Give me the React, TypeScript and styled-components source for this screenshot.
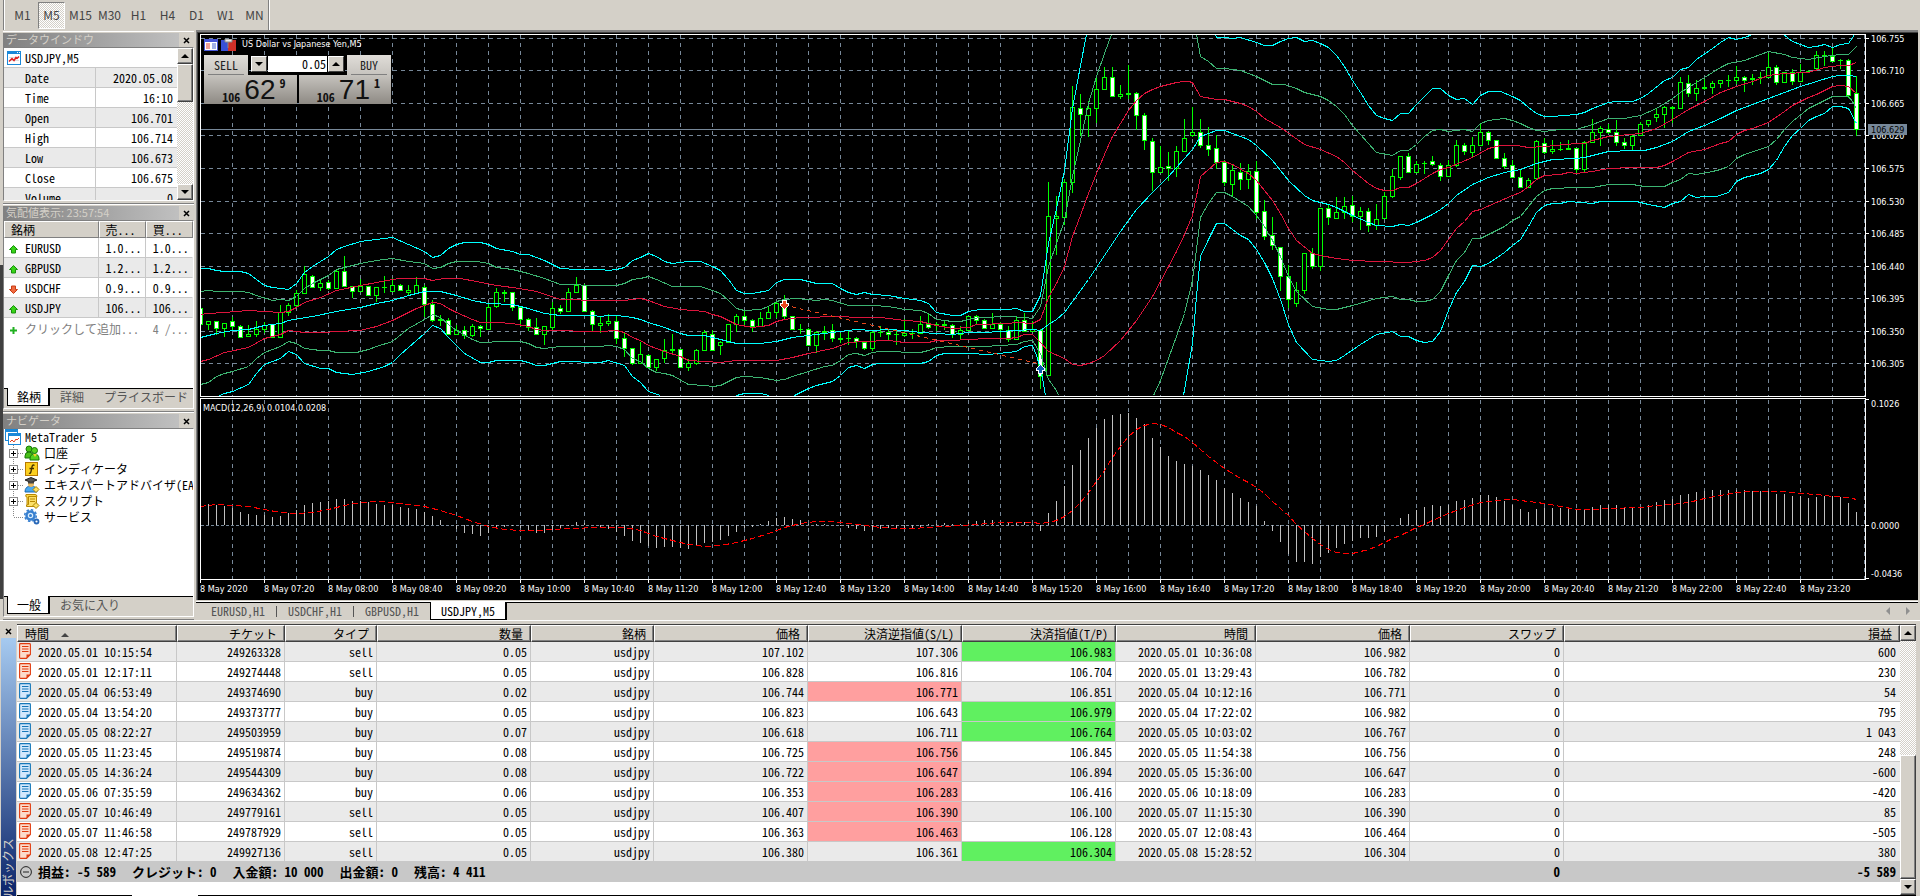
import React from 'react';
import styled, { createGlobalStyle, css } from 'styled-components';

const FACE = '#d4d0c8';
const UI_FONT = '"Noto Sans Mono CJK JP", "Noto Sans CJK JP", "Liberation Mono", monospace';
const CHART_FONT = '"DejaVu Sans Condensed", "DejaVu Sans", sans-serif';

const GlobalStyle = createGlobalStyle`
  *, *::before, *::after { box-sizing: border-box; }
  body { margin: 0; background: ${FACE}; font: 12px/16px ${UI_FONT}; color: #000; }
  button, input { font: inherit; color: inherit; margin: 0; padding: 0; border: 0; border-radius: 0; background: none; }
  table { border-collapse: separate; border-spacing: 0; table-layout: fixed; width: 100%; }
  th, td { padding: 0; font-weight: normal; white-space: nowrap; overflow: hidden; }
  ul { margin: 0; padding: 0; list-style: none; }
`;

const raised = css`
  background: ${FACE};
  border: 1px solid;
  border-color: #fff #404040 #404040 #fff;
  box-shadow: inset -1px -1px #808080;
`;
const dither = css`
  background: repeating-conic-gradient(#fff 0 25%, ${FACE} 0 50%) 0 0 / 2px 2px;
`;

/* ---------- frame ---------- */
const Page = styled.div`display: flex; flex-direction: column; background: ${FACE}; overflow: hidden;`;
const Main = styled.main`display: flex;`;
const Toolbar = styled.nav`
  display: flex; align-items: center; gap: 2px; height: 30px; width: 267px; padding: 0 2px 0 5px;
  margin-left: 3px; border-left: 1px solid #808080; border-right: 1px solid #fff;
  box-shadow: inset 1px 0 #fff, inset -1px 0 #808080;
`;
const Frame = styled.button<{ $on?: boolean }>`
  flex: 0 0 27px; height: 27px; font: 12px/24px "Noto Sans CJK JP", sans-serif; color: #444;
  border: 1px solid transparent; white-space: nowrap;
  ${p => p.$on && css`${dither} border-color: #808080 #fff #fff #808080;`}
`;

/* ---------- docked panels ---------- */
const Side = styled.aside`display: flex; flex: 0 0 196px; width: 196px; min-width: 0; padding: 1px 2px 0 0;`;
const Rail = styled.div`flex: 0 0 3px; padding: 234px 0 21px; &::before { content: ''; display: block; height: 100%; background: #404040; }`;
const Docks = styled.div`flex: 1; min-width: 0; display: flex; flex-direction: column;`;
const Panel = styled.section<{ $grow?: boolean }>`
  display: flex; flex-direction: column; padding: 1px 0 2px; border-top: 1px solid #fff; border-bottom: 1px solid #808080;
  ${p => p.$grow && 'flex: 1;'}
`;
const TitleBar = styled.header`display: flex; height: 14px;`;
const Title = styled.h2`
  flex: 1; margin: 0; padding-left: 3px; font: 11px/13px "Noto Sans CJK JP", sans-serif; color: ${FACE};
  background: linear-gradient(90deg, #808080, #c0c0c0); white-space: nowrap;
`;
const CloseBtn = styled.button`width: 15px; height: 14px; display: flex; align-items: center; justify-content: center;`;
const Body = styled.div<{ $h?: number }>`
  display: flex; flex-direction: column; background: #fff; overflow: hidden;
  border: 1px solid; border-color: #808080 #fff #fff #808080;
  ${p => (p.$h ? `height: ${p.$h}px;` : 'flex: 1;')}
`;
const Split = styled.div`display: flex; flex: 1; min-height: 0;`;
const Fill = styled.div`flex: 1; min-width: 0; min-height: 0; overflow: hidden;`;
const Symbol = styled.div`display: flex; align-items: center; gap: 4px; height: 20px; padding-left: 3px; border-bottom: 1px solid #c8c8c8;`;

const DataTable = styled.table`
  th, td { height: 20px; line-height: 19px; border-bottom: 1px solid #c8c8c8; }
  th { width: 92px; padding-left: 21px; text-align: left; border-right: 1px solid #c8c8c8; }
  td { padding-right: 4px; text-align: right; }
  tr:nth-child(odd) { background: #eaeaea; }
`;
const WatchTable = styled.table`
  thead th { height: 17px; line-height: 15px; text-align: left; padding-left: 6px; ${raised} box-shadow: none; border-color: #fff #808080 #808080 #fff; }
  tbody td { height: 20px; line-height: 19px; padding-left: 7px; border-bottom: 1px solid #c8c8c8; border-right: 1px solid #c8c8c8; }
  tbody td:first-child { padding-left: 5px; }
  tbody td:last-child { border-right-color: transparent; }
  tbody tr:nth-child(even) { background: #eaeaea; }
  tfoot td { height: 21px; color: #808080; padding-left: 7px; }
  tfoot td:first-child { padding-left: 5px; }
  svg { vertical-align: -1px; margin-right: 7px; }
`;
const Tab = styled.button<{ $on?: boolean }>`
  height: 18px; padding: 0 11px; line-height: 16px; color: #555; white-space: nowrap;
  ${p => p.$on && css`background: #fff; color: #000; border: 1px solid #000; border-width: 0 2px 1px 1px; padding: 0 10px;`}
`;
const Tabs = styled.div`
  display: flex; flex: 0 0 20px; padding-left: 3px; background: ${FACE}; box-shadow: inset 0 1px #000; white-space: nowrap; overflow: hidden;
  ${Tab} { padding: 0 10px; }
  ${Tab}:first-child { padding: 0 7px 0 9px; }
`;
const Bar = styled.span`width: 1px; height: 11px; margin-top: 4px; background: #555;`;

const ScrollTrack = styled.div`display: flex; flex-direction: column; flex: 0 0 16px; ${dither}`;
const ScrollBtn = styled.button`display: flex; align-items: center; justify-content: center; flex: 0 0 16px; width: 16px; ${raised}`;
const Thumb = styled.div<{ $before: number; $size: number }>`margin-top: ${p => p.$before}px; height: ${p => p.$size}px; ${raised}`;
const Gap = styled.div`flex: 1;`;

const Tree = styled.ul`
  padding-left: 1px; white-space: nowrap;
  li { display: flex; align-items: center; height: 16px; gap: 4px; }
  li svg + svg { margin-left: -4px; }
  svg { flex: none; }
`;

/* ---------- chart ---------- */
const Workspace = styled.section`flex: 1; min-width: 0; display: flex; flex-direction: column; padding-right: 2px;`;
const ChartBox = styled.div`
  position: relative; background: #000; border-top: 2px solid #808080; border-left: 1px solid #808080;
  > svg { display: block; width: 100%; height: auto; }
`;
const ChartTabs = styled.div`
  display: flex; height: 19px; margin-top: 1px; border-top: 1px solid #fff; box-shadow: inset 0 1px #000; padding-left: 4px;
`;
const Arrows = styled.div`margin-left: auto; display: flex; gap: 16px; align-items: center; padding-right: 8px;`;
const OneClick = styled.div`position: absolute; left: 7px; top: 6px; width: 187px;`;
const ChartTitle = styled.div`display: flex; align-items: center; gap: 3px; height: 13px; color: #fff; font: 9px/13px ${CHART_FONT}; white-space: nowrap; span { margin-left: 3px; }`;
const Deal = styled.div`display: flex; justify-content: space-between; height: 20px; margin-top: 4px; > div { display: flex; gap: 1px; padding-top: 1px; }`;
const DealBtn = styled.button`
  width: 44px; height: 20px; background: linear-gradient(#e0ddd8, #c6c3be); position: relative; line-height: 18px; color: #222;
  &::after { content: ''; position: absolute; left: 4px; right: 4px; bottom: 0; height: 1px; background: #808080; }
`;
const Step = styled.button`width: 16px; height: 16px; display: flex; align-items: center; justify-content: center; ${raised} box-shadow: none;`;
const Lot = styled.input`width: 59px; height: 16px; background: #fff; text-align: right; padding-right: 1px;`;
const Quotes = styled.div`display: flex; gap: 2px;`;
const Quote = styled.div`
  flex: 1; height: 29px; display: flex; justify-content: flex-end; align-items: flex-end; gap: 4px; padding-right: 11px; color: #111;
  background: linear-gradient(#c6c3be, #8e8a84);
  small { font: bold 12px/15px ${UI_FONT}; }
  strong { font: 28px/29px "Liberation Sans", sans-serif; }
  sup { font: bold 12px/15px ${UI_FONT}; align-self: flex-start; }
`;

/* ---------- toolbox ---------- */
const Toolbox = styled.section`display: flex; border-top: 1px solid #fff; padding: 3px 4px 0 0;`;
const Spine = styled.div`flex: 0 0 15px; margin-right: 1px; display: flex; flex-direction: column; padding-left: 1px;`;
const SpineTitle = styled.h2`
  flex: 1 1 0; min-height: 0; margin: 0; padding-bottom: 200px; overflow: hidden; color: ${FACE};
  background: linear-gradient(#0a246a, #a6caf0); writing-mode: vertical-rl; text-orientation: sideways;
  transform: rotate(180deg); font: 12px/14px "Noto Sans CJK JP", sans-serif; white-space: nowrap;
  display: flex; justify-content: flex-end;
`;
const History = styled.div`flex: 1; min-width: 0; display: flex; flex-direction: column; background: #fff; border-top: 1px solid #404040;`;
const HistoryTable = styled.table`
  th { height: 17px; line-height: 15px; text-align: right; padding-right: 7px; ${raised} }
  th:first-child { text-align: left; padding-left: 7px; }
  th svg { vertical-align: 2px; }
  td { height: 20px; line-height: 19px; text-align: right; padding-right: 3px; border-right: 1px solid #c8c8c8; border-bottom: 1px solid #c8c8c8; }
  td:last-child { border-right: 0; padding-right: 4px; }
  tbody tr:nth-child(odd) { background: #eaeaea; }
  td:first-child { text-align: left; padding-left: 2px; }
  td svg { vertical-align: top; margin: 1px 7px 0 0; }
  tfoot td { background: #c8c8c8; border-color: #c8c8c8; font-weight: bold; font-size: 13px; }
`;
const Hit = styled.td<{ $hit?: 'sl' | 'tp' }>`background: ${p => (p.$hit === 'sl' ? '#ff9f9f' : p.$hit === 'tp' ? '#60f060' : 'transparent')};`;
const Sums = styled.div`display: flex; gap: 16px; && svg { flex: none; margin: 4px -10px 0 1px; }`;
const Edge = styled.div`display: flex; height: 1px; background: #000; &::before { content: ''; width: 66px; margin-left: 115px; background: #fff; }`;

/* ---------- icons ---------- */
const Cross = () => <svg width="7" height="7" viewBox="0 0 7 7"><path d="M1 1l5 5M6 1L1 6" stroke="#000" strokeWidth="1.5" /></svg>;
const Tri = ({ up, c = '#000' }: { up?: boolean; c?: string }) => (
  <svg width="8" height="4" viewBox="0 0 8 4"><path d={up ? 'M0 4L4 0L8 4Z' : 'M0 0H8L4 4Z'} fill={c} /></svg>
);
const ChartIcon = () => (
  <svg width="14" height="14" viewBox="0 0 14 14">
    <rect x=".5" y=".5" width="13" height="13" fill="#fff" stroke="#1b88d8" /><rect width="14" height="3" fill="#1b88d8" />
    <path d="M10 1.5h1M12 1.5h1" stroke="#fff" /><path d="M2 6.5h10M2 9.5h10" stroke="#ddd" />
    <path d="M2 10.500l3-3 2 2 2-3 1 1 2-2" fill="none" stroke="#e02020" strokeWidth="1.500" />
  </svg>
);
const RootIcon = () => (
  <svg width="16" height="16" viewBox="0 0 16 16">
    <rect x=".5" y=".5" width="12" height="11" fill="#fff" stroke="#1b88d8" /><rect width="13" height="3" fill="#1b88d8" />
    <rect x="3.500" y="4.500" width="12" height="11" fill="#fff" stroke="#1b88d8" /><rect x="3" y="4" width="13" height="3" fill="#1b88d8" />
    <path d="M5 13l2-2 2 2 2-3 1 1 2-2" fill="none" stroke="#e04020" />
  </svg>
);
const Arrow = ({ up }: { up?: boolean }) => (
  <svg width="9" height="9" viewBox="0 0 9 9">
    <path d={up ? 'M4.500.5L8.500 4.500H6.500V8H2.500V4.500H.5Z' : 'M4.500 8.500L8.500 4.500H6.500V1H2.500V4.500H.5Z'} fill={up ? '#38d418' : '#f06a40'} stroke={up ? '#18900c' : '#c83c14'} />
  </svg>
);
const Plus = () => <svg width="9" height="9" viewBox="0 0 9 9"><path d="M4.500 1v7M1 4.500h7" stroke="#20b020" strokeWidth="2" /></svg>;
const Doc = ({ buy }: { buy: boolean }) => {
  const c = buy ? '#1878b8' : '#e03c10';
  return (
    <svg width="12" height="16" viewBox="0 0 12 16">
      <path d="M1.500.6H10.500Q11.400.6 11.400 1.500V11.500L7.500 15.400H1.500Q.6 15.400.6 14.500V1.500Q.6.6 1.500.6Z" fill={buy ? '#d4e8fc' : '#fcdccc'} stroke={c} strokeWidth="1.100" />
      <path d="M3 3.500h6.500M3 6h6.500M3 8.500h6.500" stroke={c} /><path d="M7.500 15.400V11.500H11.400Z" fill={c} />
    </svg>
  );
};
const Node = ({ leaf }: { leaf?: boolean }) => (
  <svg width="19" height="16" viewBox="0 0 19 16" shapeRendering="crispEdges">
    <path d={leaf ? 'M8.500 0V8' : 'M8.500 0V16'} stroke="#888" strokeDasharray="1 1" /><path d="M9 8.500H19" stroke="#888" strokeDasharray="1 1" />
    {!leaf && <><rect x="4.500" y="4.500" width="8" height="8" fill="#fff" stroke="#888" /><path d="M6 8.500h5M8.500 6v5" stroke="#000" /></>}
  </svg>
);
const Glyph = ({ children }: { children: React.ReactNode }) => <svg width="16" height="16" viewBox="0 0 16 16">{children}</svg>;
const Accounts = () => (
  <Glyph>
    <circle cx="5" cy="4" r="3" fill="#48c018" stroke="#187808" /><path d="M1 11q0-4 4-4t4 4v2H1z" fill="#48c018" stroke="#187808" />
    <circle cx="10.500" cy="5.500" r="3" fill="#58d020" stroke="#187808" /><path d="M6 14q0-5 4.500-5t4.500 5v1H6z" fill="#58d020" stroke="#187808" /><path d="M9 9l2 3 2-3z" fill="#f8d030" />
  </Glyph>
);
const Indicators = () => (
  <Glyph>
    <rect x="1.500" y="1.500" width="12" height="13" fill="#fcd020" stroke="#b87800" />
    <path d="M10.500 4.500Q8.500 3 8 6L7 10.500Q6.500 13 5 12M5.500 7.500h4.500" fill="none" stroke="#403000" strokeWidth="1.300" />
  </Glyph>
);
const Experts = () => (
  <Glyph>
    <path d="M1 15q0-6 6-6t6 6z" fill="#48a8f0" stroke="#1868b0" /><circle cx="7" cy="7" r="3" fill="#e8b860" />
    <path d="M1 3l6-2.500L13 3 7 5.500z" fill="#555" stroke="#222" /><path d="M4 4.500v2h6v-2" fill="#444" /><path d="M12 9.500l3 3-3 3-3-3z" fill="#fce060" stroke="#a88000" />
  </Glyph>
);
const Scripts = () => (
  <Glyph>
    <path d="M2 1.500h9q2 0 2 2H5V12H3V4Q1 4 2 1.500Z" fill="#fcd848" stroke="#b88800" /><path d="M4.500 3.500h8v8q0 2-2 2h-8q-1-2 2-2z" fill="#fce068" stroke="#b88800" />
    <path d="M6 6h5M6 8.500h5" stroke="#b88800" /><path d="M12 9.500l3 3-3 3-3-3z" fill="#fce060" stroke="#a88000" />
  </Glyph>
);
const Services = () => (
  <Glyph>
    <circle cx="6.500" cy="6.500" r="4" fill="#d8ecfc" stroke="#3880d0" strokeWidth="2.500" /><circle cx="6.500" cy="6.500" r="5.800" fill="none" stroke="#3880d0" strokeWidth="1.500" strokeDasharray="2.500 2" />
    <circle cx="6.500" cy="6.500" r="1.500" fill="#3880d0" /><circle cx="12.500" cy="12.500" r="2" fill="#fff" stroke="#2868b8" strokeWidth="1.800" />
  </Glyph>
);

/* ---------- chart data: levels are thirds of a plot unit below the top of the pane ---------- */
type Candle = [number, number, number, number, number];
const LOW_SHIFT = 510;
// high, body top, body bottom, low, 1 = falling
const asia: Candle[] = [
  [324,324,373,373,1],[364,364,374,387,0],[363,364,386,403,1],[370,370,386,410,0],[352,363,380,390,1],[376,379,412,412,1],[377,403,410,410,0],[363,388,404,410,0],
  [367,377,388,396,0],[374,374,412,412,1],[315,337,412,412,0],[310,316,337,347,0],[270,280,317,322,0],[199,223,280,280,0],[226,229,262,262,1],[240,250,262,272,0],
  [242,247,266,268,1],[208,214,265,265,0],[169,213,259,259,1],[258,259,275,293,1],[238,259,275,275,0],[258,259,286,286,1],[262,262,287,303,0],[229,263,263,276,0],
  [236,256,274,274,0],[252,255,271,271,1],[256,270,276,286,0],[231,256,279,279,0],[255,262,313,349,1],[301,313,361,365,1],[346,358,361,376,1],[355,361,403,403,1],
  [377,391,403,403,0],[380,391,407,416,1],[373,379,407,410,0],[377,379,386,410,1],[312,322,388,388,0],[265,277,320,322,0],[270,277,280,304,0],[277,277,322,331,1],
  [320,322,358,378,1],[355,358,382,391,1],[355,382,403,403,1],[379,379,404,434,0],[307,325,383,388,0],[316,325,334,340,1],[265,277,334,334,0],[232,256,278,278,0],
  [252,256,334,334,1],[330,334,373,391,1],[352,371,376,398,0],[343,364,370,376,0],[349,363,415,431,1],[400,415,445,470,1],[445,445,490,494,1],[427,463,490,490,0],
  [464,466,502,502,1],[478,478,502,512,0],[418,451,475,488,0],[403,448,452,460,0],[448,448,502,502,1],[478,490,503,512,0],[448,451,490,494,0],[391,397,451,451,0],
  [391,403,451,451,1],[424,427,437,464,0],[373,373,427,427,0],[343,349,374,395,0],[331,349,361,373,1],[358,361,380,395,1],[337,355,379,379,0],[321,337,355,355,0],
  [305,310,337,353,0],[286,310,349,355,1],[349,349,388,388,1],[373,387,387,400,0],[385,388,436,436,1],[393,397,436,458,0],[379,394,398,419,0],[373,391,415,424,1],
  [400,415,418,428,0],[392,415,415,434,0],[412,415,424,443,1],[424,427,445,449,1],[393,397,445,451,0],[379,397,397,410,0],[391,397,404,418,1],[388,403,403,434,0],
  [358,400,407,410,0],[388,400,400,416,0],[349,373,401,401,0],[342,373,382,385,1],[367,373,377,391,0],[361,373,377,389,0],[373,376,403,412,1],[379,391,403,418,0],
  [349,349,391,391,0],[347,349,361,373,1],[358,361,385,385,1],[340,373,385,385,0],[368,373,389,413,1],[379,391,418,425,1],[352,361,418,418,0],[340,361,394,394,1],
  [364,388,394,394,0],[388,391,529,566,1],
];
const newYork: Candle[] = [
  [457,559,1036,1036,0],[499,559,565,674,0],[448,457,562,582,0],[168,232,457,488,0],[193,235,253,316,1],[214,235,256,320,0],[139,178,235,278,0],[112,142,178,178,0],
  [112,142,199,199,1],[166,193,199,206,0],[107,190,193,206,0],[187,190,256,299,1],[250,256,331,359,1],[325,334,427,482,1],[349,412,427,427,0],[367,409,415,452,1],
  [349,364,415,440,0],[268,325,364,364,0],[233,307,316,319,0],[268,307,346,352,1],[292,346,358,376,1],[316,355,397,415,1],[392,397,457,467,1],[404,421,464,496,0],
  [400,427,448,478,1],[404,424,448,476,0],[394,424,547,565,1],[511,544,619,628,1],[562,616,646,658,1],[652,652,739,782,1],[706,739,808,832,1],[757,781,821,829,0],
  [670,670,781,790,0],[655,670,709,716,1],[535,535,709,721,0],[524,535,562,583,1],[502,547,565,565,0],[502,529,547,566,0],[499,526,559,574,1],[532,544,559,598,0],
  [536,544,586,604,1],[523,568,586,598,0],[487,499,565,565,0],[418,439,499,502,0],[379,379,442,448,0],[370,379,427,427,1],[394,403,427,427,0],[394,401,401,430,0],
  [379,394,403,405,1],[400,406,439,452,1],[392,406,439,439,0],[331,346,406,409,0],[340,346,364,374,1],[322,346,367,380,0],[283,307,346,346,0],[303,307,331,344,1],
  [330,331,385,385,1],[370,385,409,415,1],[392,406,442,442,1],[418,442,472,472,1],[445,451,472,472,0],[331,334,445,445,0],[325,340,367,370,1],[331,358,364,371,0],
  [337,358,358,362,0],[331,355,358,358,0],[355,355,418,427,1],[334,337,418,424,0],[268,307,337,337,0],[289,295,307,347,0],[283,298,307,310,1],[271,307,337,346,1],
  [325,337,346,355,1],[313,319,346,361,0],[277,283,316,316,0],[271,271,283,290,0],[238,253,262,274,0],[229,232,253,292,0],[228,232,235,277,0],[142,157,235,235,0],
  [136,160,190,200,1],[151,175,190,212,0],[148,172,176,179,0],[154,160,172,190,0],[151,151,160,172,0],[136,151,151,170,0],[110,142,151,161,0],[139,142,151,184,1],
  [133,146,149,163,0],[127,143,143,160,0],[70,112,142,142,0],[106,112,157,163,1],[127,127,157,157,0],[118,127,154,163,1],[103,127,154,154,0],[121,124,124,127,0],
  [64,76,115,115,0],[64,76,76,107,0],[52,79,94,94,1],[88,92,92,115,0],[88,91,196,203,1],[140,190,298,317,1],
];
const candles: Candle[] = [
  ...asia.map(([h, t, b, l, f]) => [h + LOW_SHIFT, t + LOW_SHIFT, b + LOW_SHIFT, l + LOW_SHIFT, f] as Candle),
  ...newYork,
];

const CYAN = '#00ffff', GREEN = '#3cb371', RED = '#dc143c';
// Each band is split over four windows (a, b, c, d); "|" breaks the line where it leaves the pane.
type Band = { color: string; a: string; b: string; c: string; d: string };
const bands: Band[] = [
  { color: CYAN,
    a: '13,205 37,204 61,210 85,214 133,215 157,220 181,238 205,256 229,262 277,268 301,249 325,216 349,199 397,170 421,148 445,139 493,124 541,118 589,112 637,133 685,154 709,172 733,165 757,145 781,132 805,127 853,127 877,133 901,145 949,154 973,162 997,164 1045,181 1093,204 1141,209 1213,208 1237,211 1261,208 1285,202 1309,182',
    b: '1,172 25,159 49,170 73,184 97,190 145,184 181,184 217,198 241,210 265,238 289,270 313,281 337,280 385,270 409,247 433,238 481,238 529,250 577,250 601,264 625,276 649,283 673,277 697,283 745,286 793,295 841,301 865,310 889,337 937,346 961,346 985,335 1021,328 1105,328 1129,325 1153,334 1177,334',
    c: '121,796 145,640 169,535 193,420 217,235 241,105 260,14 | 647,14 649,22 673,22 697,24 721,22 769,37 793,46 817,46 841,34 865,25 889,21 913,34 937,31 961,39 985,52 1009,76 1033,108 1057,150 1081,188 1105,226 1129,255 1153,265 1177,271 1201,250 1225,250 1249,224 1273,199 1297,176',
    d: '1,175 25,195 49,208 73,205 97,223 121,196 145,184 181,184 217,198 241,210 265,232 289,249 313,260 337,259 409,253 433,247 457,235 505,217 529,214 577,213 601,205 625,190 673,151 697,142 721,118 745,112 769,87 817,54 841,38 865,22 889,28 913,22 937,14 | 1030,14 1057,34 1105,52 1129,49 1153,43 1177,52 1201,43 1225,40 1243,14' },
  { color: GREEN,
    a: '13,275 37,271 61,274 133,274 157,277 181,286 229,301 253,298 277,301 301,289 325,264 349,250 397,226 421,208 445,202 493,190 541,181 589,175 637,184 685,190 709,205 733,202 757,190 781,184 841,184 877,190 901,202 949,209 997,220 1045,235 1093,253 1141,253 1165,257 1261,257 1285,250 1309,238',
    b: '1,235 25,229 49,238 97,259 181,260 217,270 241,280 265,301 289,325 313,331 361,328 385,320 409,305 433,298 469,295 529,301 553,298 577,300 625,316 697,317 745,319 793,328 841,331 865,340 889,358 937,364 961,364 985,357 1021,352 1105,349 1153,352 1177,355',
    c: '121,830 145,710 169,640 193,570 217,440 241,330 265,220 289,140 313,70 335,14 | 589,14 601,78 625,94 649,115 673,115 721,121 769,138 793,152 817,163 853,163 889,174 913,187 961,199 985,210 1009,228 1033,253 1057,286 1105,340 1129,366 1177,376 1201,361 1225,361 1249,342 1273,318 1297,301',
    d: '1,298 25,304 73,299 97,304 121,280 145,271 193,265 217,271 241,280 265,292 289,301 313,304 361,299 409,298 457,284 505,265 553,265 601,256 649,235 697,205 721,187 769,157 817,127 841,112 865,100 913,91 961,73 985,64 1033,73 1057,81 1105,88 1153,80 1201,73 1225,73 1249,50' },
  { color: RED,
    a: '13,344 37,340 85,337 157,331 205,334 253,337 277,333 301,322 325,307 373,292 421,271 493,256 541,247 589,238 613,235 685,235 709,241 745,235 793,235 841,243 901,256 949,262 1021,274 1093,298 1141,298 1165,301 1285,301',
    b: '1,295 25,301 73,319 121,328 193,334 217,343 241,349 265,360 289,373 337,381 385,376 409,363 433,358 481,352 601,349 649,353 721,352 793,360 841,363 889,376 937,385 985,383 1009,373 1105,370 1129,367 1177,370',
    c: '121,868 145,802 169,760 193,710 217,618 241,556 265,490 289,430 313,374 337,320 361,280 385,242 409,212 433,190 457,178 481,169 529,158 553,154 565,154 577,158 601,199 649,208 673,209 721,220 745,230 769,244 793,264 841,291 913,343 961,358 1009,379 1033,397 1057,421 1105,460 1129,474 1153,481 1177,482 1201,472 1225,472 1249,460 1297,430',
    d: '1,417 25,412 97,382 145,354 181,346 229,346 265,352 313,349 409,340 433,340 457,330 505,318 601,310 649,295 697,267 745,238 793,213 841,187 889,169 937,154 985,136 1033,130 1105,127 1153,112 1201,105 1225,105 1249,97' },
  { color: RED,
    a: '13,485 37,478 85,458 157,442 205,415 253,403 277,391 325,397 385,397 421,395 493,391 541,379 589,361 637,337 661,325 685,316 709,307 733,310 757,325 781,337 829,358 853,367 901,368 949,370 997,379 1021,388 1045,391 1213,394 1261,391 1285,398 1309,412',
    b: '1,421 25,436 73,455 121,469 145,481 193,483 241,488 289,481 409,481 457,472 505,460 577,445 601,436 625,427 673,424 745,421 793,427 865,427 889,421 937,421 985,418 1045,415 1105,415 1129,412 1153,403 1177,403',
    c: '121,937 145,965 193,986 217,1002 241,1006 265,1000 289,990 313,976 361,930 409,870 457,798 505,710 529,663 553,614 577,555 601,440 649,397 673,394 697,403 745,430 769,450 793,482 817,512 841,550 865,596 889,630 937,670 961,675 1009,685 1057,691 1129,694 1225,697 1273,691 1297,682',
    d: '1,662 25,628 49,595 73,574 97,544 121,538 169,517 217,496 241,487 265,470 289,448 313,436 361,433 385,427 409,430 457,424 505,415 577,412 649,412 673,406 697,394 745,367 793,358 841,341 865,333 889,313 913,301 937,294 985,277 1033,244 1057,227 1105,202 1129,193 1177,169 1201,166 1225,169 1249,190' },
  { color: GREEN,
    a: '13,553 37,547 61,530 85,520 109,514 157,498 181,476 205,458 253,439 277,424 301,430 325,445 373,451 397,451 421,457 481,457 517,448 541,440 589,424 637,385 685,358 709,343 733,352 757,372 781,391 829,418 853,427 877,427 901,424 973,424 997,430 1021,441 1045,445 1093,439 1213,439 1237,436 1261,440 1285,449 1309,475',
    b: '1,484 25,506 49,517 73,520 97,527 145,552 193,556 217,559 241,556 265,545 289,532 313,529 361,532 409,541 433,538 457,529 505,514 553,499 577,495 601,480 625,464 649,460 673,466 697,458 721,454 841,458 865,452 889,441 937,439 1033,439 1081,436 1129,433 1153,424 1177,421',
    c: '121,970 145,1047 169,1080 176,1096 | 460,1096 481,1050 505,985 529,920 553,850 577,750 601,562 625,520 649,487 673,487 697,500 745,529 769,556 793,590 817,630 841,680 865,740 889,785 937,828 985,838 1009,838 1057,825 1129,804 1177,800 1201,808 1225,808 1249,814 1273,815 1297,808',
    d: '1,785 25,735 49,690 73,667 97,625 121,625 145,613 193,589 217,572 241,560 265,530 289,498 313,481 337,475 361,475 385,471 457,471 505,463 577,463 613,468 673,469 697,457 721,449 745,430 769,434 817,425 841,419 865,410 889,385 913,374 985,349 1009,328 1033,298 1057,274 1105,235 1177,199 1225,199 1237,214 1249,235' },
  { color: CYAN,
    a: '70,586 85,580 109,574 157,552 181,521 205,494 253,475 277,454 301,463 325,490 373,505 397,506 421,517 469,523 517,514 565,499 589,487 613,464 637,442 685,400 709,376 733,386 757,413 805,460 853,487 877,487 901,481 973,481 997,487 1021,496 1045,496 1093,484 1213,487 1237,481 1285,497 1309,530',
    b: '1,547 25,574 61,586 | 289,586 313,580 361,580 388,586 | 464,586 505,566 529,556 577,544 601,526 625,502 649,495 673,505 697,493 721,490 841,490 865,484 889,467 913,460 985,460 1045,463 1105,457 1129,454 1153,439 1177,436 1189,465',
    c: '121,1015 129,1060 136,1096 | 549,1096 565,1010 577,940 589,800 601,680 625,628 649,580 673,580 697,598 721,615 745,627 769,658 793,696 817,744 841,808 865,882 889,937 937,988 985,994 1009,990 1033,976 1081,944 1129,913 1177,904 1201,919 1225,919 1249,931 1273,937 1297,934',
    d: '1,905 25,842 49,787 73,755 97,706 121,709 145,700 193,667 217,646 241,628 265,590 289,547 313,526 337,520 361,520 385,514 457,520 481,514 589,514 625,523 673,532 697,520 721,514 745,493 769,502 793,499 829,498 865,487 889,454 913,442 961,430 985,418 1009,391 1033,350 1057,316 1081,295 1105,272 1129,260 1153,250 1177,229 1201,229 1225,234 1249,280' },
  { color: CYAN,
    a: '13,413 61,400 109,391 157,388 205,377 253,370 277,362 349,349 421,334 493,322 541,311 589,301 637,286 661,280 685,274 733,274 781,286 829,301 877,311 949,314 997,325 1045,340 1093,347 1189,346 1213,349 1237,346 1261,346 1309,353',
    b: '1,358 25,367 73,383 121,400 145,406 193,406 241,418 289,430 361,430 409,424 457,412 505,406 553,399 601,394 649,388 697,391 745,388 793,391 841,397 889,400 937,404 985,397 1033,397 1081,394 1129,391 1177,388',
    c: '121,901 145,883 169,867 193,846 217,814 265,748 313,676 361,604 409,538 457,487 505,440 553,385 577,358 601,318 649,301 673,301 697,310 745,327 769,346 817,390 865,452 913,495 937,510 985,522 1009,532 1057,556 1105,576 1129,586 1177,589 1201,583 1225,586 1249,577 1297,553',
    d: '1,538 25,520 49,496 97,464 145,442 193,427 241,419 289,400 337,389 409,385 433,381 505,364 577,361 613,360 649,352 697,334 745,304 793,286 841,266 889,241 937,223 985,205 1033,187 1081,169 1129,154 1177,140 1201,136 1225,136 1249,140' },
];
const place = (s: string, x0: number, y0: number) =>
  s.split(' ').map(t => {
    if (t === '|') return '|';
    const [x, y] = t.split(',').map(Number);
    return `${x0 + Math.floor(x / 3) + 0.5},${y0 + Math.floor(y / 3) + 0.5}`;
  }).join(' ');
const bandLines = (b: Band) =>
  [place(b.a, 196, 200), place(b.b, 640, 200), place(b.c, 1000, 30), place(b.d, 1440, 30)].join(' ').split(' | ');

const macd = [
  348,342,347,350,355,366,372,375,376,381,378,370,360,346,339,336,334,327,327,333,333,336,342,346,346,351,354,358,366,380,390,406,418,429,432,438,430,418,411,409,414,423,429,429,420,416,410,396,401,407,
  411,417,426,438,453,459,469,474,471,471,474,477,470,459,456,450,438,426,415,411,402,393,384,381,387,390,402,402,402,406,410,414,417,423,420,417,416,414,416,416,411,402,404,399,402,402,396,393,392,392,
  397,401,399,398,404,423,369,333,288,225,180,144,114,87,75,72,70,84,104,144,171,198,213,222,228,240,255,270,294,309,324,336,348,393,423,456,492,516,516,522,501,489,474,462,453,444,444,441,426,407,
  384,372,360,351,345,348,346,333,330,324,315,315,321,333,345,357,366,357,356,354,354,357,360,360,351,345,346,346,354,354,352,345,336,330,327,315,312,306,304,300,300,300,300,300,303,303,303,312,312,318,
  320,324,321,318,318,321,339,366,
];
const signal = '0,348 2,343 4,345 6,349 8,358 10,367 12,370 14,368 16,358 18,346 20,338 22,335 24,337 26,343 28,349 30,360 32,376 34,393 36,409 38,419 40,421 42,421 44,418 46,416 50,412 53,411 55,421 57,438 59,452 61,463 63,469 65,467 67,458 69,446 71,430 73,411 75,400 77,394 79,394 81,400 83,406 85,411 87,414 89,414 91,412 93,408 95,406 97,402 100,397 104,398 105,400 106,397 107,391 108,378 109,360 110,338 111,308 112,275 113,240 114,203 115,168 116,140 117,117 118,105 119,100 120,103 121,112 122,126 123,140 124,156 125,177 126,198 127,216 128,234 129,250 130,264 131,277 132,292 133,310 134,333 135,355 136,377 137,402 138,425 139,445 140,463 141,478 142,487 143,490 144,490 145,484 146,477 147,468 148,456 149,446 150,435 151,424 152,412 153,402 154,392 156,370 158,352 160,338 162,331 164,328 166,334 168,341 170,349 172,357 174,357 176,354 180,352 182,347 184,343 186,336 188,325 190,317 192,308 194,304 198,304 200,310 202,314 204,319 206,322 207,328'
  .split(' ').map(t => { const [i, y] = t.split(',').map(Number); return `${200.5 + 8 * i},${390 + Math.floor(y / 3) + 0.5}`; }).join(' ');

const priceRows = [38, 70, 103, 135, 168, 201, 233, 266, 298, 331, 363];
const gridCols = Array.from({ length: 52 }, (_, k) => 232 + 32 * k);
const times = Array.from({ length: 26 }, (_, k) => {
  const m = 400 + 40 * k;
  return k === 0 ? '8 May 2020' : `8 May ${String(Math.floor(m / 60)).padStart(2, '0')}:${String(m % 60).padStart(2, '0')}`;
});

const Chart = () => (
  <svg viewBox="197 32 1721 568" shapeRendering="crispEdges" role="img" aria-label="USDJPY M5">
    <g stroke="#778899" strokeDasharray="4 4" fill="none">
      {gridCols.map(x => <path key={x} d={`M${x + 0.5} 35V396M${x + 0.5} 400V579`} />)}
      {priceRows.map(y => <path key={y} d={`M201 ${y + 0.5}H1865`} />)}
    </g>
    <path d="M201 525.500H1865" stroke="#778899" strokeDasharray="3 2" />
    <path d="M201 129.500H1865" stroke="#778899" />
    <g stroke="#00ff00">
      {candles.map(([h, t, b, l, f], i) => {
        const x = 200.5 + 8 * i;
        const [hi, top, bot, lo] = [h, t, b, l].map(v => 30 + Math.floor(v / 3));
        return (
          <g key={i}>
            <path d={`M${x} ${hi}V${lo + 1}`} />
            {bot === top ? <path d={`M${x - 2.5} ${top + 0.5}h5`} /> : <rect x={x - 2} y={top + 0.5} width="4" height={bot - top} fill={f ? '#fff' : '#000'} />}
          </g>
        );
      })}
    </g>
    {bands.map((b, k) => bandLines(b).map((pts, n) => <polyline key={`${k}-${n}`} points={pts} fill="none" stroke={b.color} />))}
    <path d="M784 305L1040 364" stroke="#e8481c" strokeDasharray="4 4" />
    <path d="M782.500 300.500h4v3h2v2l-4 4-4-4v-2h2z" fill="#e8481c" stroke="#fff" />
    <path d="M1038.500 373.500h4v-3h2v-2l-4-4-4 4v2h2z" fill="#0a5cb0" stroke="#fff" />
    <g stroke="#c0c0c0">
      {macd.map((v, i) => <path key={i} d={`M${200.5 + 8 * i} 525V${390 + Math.floor(v / 3)}`} />)}
    </g>
    <polyline points={signal} fill="none" stroke="#ff0000" strokeDasharray="6 3" />
    <path d="M197 0H200V640H197Z" fill="#000" />
    <path d="M197.500 32V600M197 32.500H1918" stroke="#404040" />
    <g stroke="#fff" fill="none">
      <path d="M200.500 34V396.500H1865.500V34.500H200M200.500 398V579.500H1865.500V398.500H200" />
      {priceRows.map(y => <path key={y} d={`M1866 ${y + 0.5}h3`} />)}
      <path d="M1866 399.500h3M1866 525.500h3M1866 578.500h3" />
      {times.map((t, k) => <path key={t} d={`M${200.5 + 64 * k} 579v4`} />)}
    </g>
    <g fill="#fff" fontFamily={CHART_FONT} fontSize="9">
      {priceRows.map((y, k) => <text key={y} x="1871" y={y + 4}>{(106.755 - 0.045 * k).toFixed(3)}</text>)}
      <rect x="1868" y="124" width="39" height="11" fill="#778899" />
      <text x="1871" y="133" fill="#000">106.629</text>
      <text x="1871" y="407">0.1026</text>
      <text x="1871" y="529">0.0000</text>
      <text x="1871" y="577">-0.0436</text>
      <text x="203" y="411">MACD(12,26,9) 0.0104 0.0208</text>
      {times.map((t, k) => <text key={t} x={200 + 64 * k} y="592">{t}</text>)}
    </g>
  </svg>
);

/* ---------- tables ---------- */
const quotes = [['EURUSD', '1.0...', true], ['GBPUSD', '1.2...', true], ['USDCHF', '0.9...', false], ['USDJPY', '106...', true]] as const;
const dataRows = [['Date', '2020.05.08'], ['Time', '16:10'], ['Open', '106.701'], ['High', '106.714'], ['Low', '106.673'], ['Close', '106.675'], ['Volume', '0']];
const deals = `2020.05.01 10:15:54|249263328|sell|0.05|107.102|107.306|106.983|2020.05.01 10:36:08|106.982|600|tp
2020.05.01 12:17:11|249274448|sell|0.05|106.828|106.816|106.704|2020.05.01 13:29:43|106.782|230|
2020.05.04 06:53:49|249374690|buy|0.02|106.744|106.771|106.851|2020.05.04 10:12:16|106.771|54|sl
2020.05.04 13:54:20|249373777|buy|0.05|106.823|106.643|106.979|2020.05.04 17:22:02|106.982|795|tp
2020.05.05 08:22:27|249503959|buy|0.07|106.618|106.711|106.764|2020.05.05 10:03:02|106.767|1 043|tp
2020.05.05 11:23:45|249519874|buy|0.08|106.725|106.756|106.845|2020.05.05 11:54:38|106.756|248|sl
2020.05.05 14:36:24|249544309|buy|0.08|106.722|106.647|106.894|2020.05.05 15:36:00|106.647|-600|sl
2020.05.06 07:35:59|249634362|buy|0.06|106.353|106.283|106.416|2020.05.06 10:18:09|106.283|-420|sl
2020.05.07 10:46:49|249779161|sell|0.05|106.407|106.390|106.100|2020.05.07 11:15:30|106.390|85|sl
2020.05.07 11:46:58|249787929|sell|0.05|106.363|106.463|106.128|2020.05.07 12:08:43|106.464|-505|sl
2020.05.08 12:47:25|249927136|sell|0.05|106.380|106.361|106.304|2020.05.08 15:28:52|106.304|380|tp`
  .split('\n').map(r => r.split('|'));
const columns = [160, 108, 92, 154, 123, 154, 154, 154, 140, 154, 154, 0];
const headings = ['チケット', 'タイプ', '数量', '銘柄', '価格', '決済逆指値(S/L)', '決済指値(T/P)', '時間', '価格', 'スワップ', '損益'];

const PanelHead = ({ title }: { title: string }) => (
  <TitleBar><Title>{title}</Title><CloseBtn aria-label="閉じる"><Cross /></CloseBtn></TitleBar>
);
const Scroll = ({ before, size }: { before: number; size: number }) => (
  <ScrollTrack>
    <ScrollBtn aria-label="上へ"><Tri up /></ScrollBtn>
    <Thumb $before={before} $size={size} />
    <Gap />
    <ScrollBtn aria-label="下へ"><Tri /></ScrollBtn>
  </ScrollTrack>
);

export default function App() {
  return (
    <Page>
      <GlobalStyle />
      <Toolbar aria-label="時間足">
        {['M1', 'M5', 'M15', 'M30', 'H1', 'H4', 'D1', 'W1', 'MN'].map(t => <Frame key={t} $on={t === 'M5'}>{t}</Frame>)}
      </Toolbar>
      <Main>
        <Side>
          <Rail />
          <Docks>
            <Panel>
              <PanelHead title="データウインドウ" />
              <Body $h={154}>
                <Split>
                  <Fill>
                    <Symbol><ChartIcon />USDJPY,M5</Symbol>
                    <DataTable><tbody>{dataRows.map(([k, v]) => <tr key={k}><th scope="row">{k}</th><td>{v}</td></tr>)}</tbody></DataTable>
                  </Fill>
                  <Scroll before={0} size={38} />
                </Split>
              </Body>
            </Panel>
            <Panel>
              <PanelHead title="気配値表示: 23:57:54" />
              <Body $h={189}>
                <Fill>
                  <WatchTable>
                    <colgroup><col width="94" /><col width="47" /><col width="47" /></colgroup>
                    <thead><tr><th>銘柄</th><th>売...</th><th>買...</th></tr></thead>
                    <tbody>
                      {quotes.map(([s, q, up]) => <tr key={s}><td><Arrow up={up} />{s}</td><td>{q}</td><td>{q}</td></tr>)}
                    </tbody>
                    <tfoot><tr><td colSpan={2}><Plus />クリックして追加...</td><td>4 /...</td></tr></tfoot>
                  </WatchTable>
                </Fill>
                <Tabs><Tab $on>銘柄</Tab><Tab>詳細</Tab><Bar /><Tab>プライスボード</Tab></Tabs>
              </Body>
            </Panel>
            <Panel $grow>
              <PanelHead title="ナビゲータ" />
              <Body>
                <Fill>
                  <Tree>
                    <li><RootIcon />MetaTrader 5</li>
                    <li><Node /><Accounts />口座</li>
                    <li><Node /><Indicators />インディケータ</li>
                    <li><Node /><Experts />エキスパートアドバイザ(EA)</li>
                    <li><Node /><Scripts />スクリプト</li>
                    <li><Node leaf /><Services />サービス</li>
                  </Tree>
                </Fill>
                <Tabs><Tab $on>一般</Tab><Tab>お気に入り</Tab></Tabs>
              </Body>
            </Panel>
          </Docks>
        </Side>
        <Workspace>
          <ChartBox>
            <Chart />
            <OneClick>
              <ChartTitle>
                <svg width="14" height="12" viewBox="0 0 14 12"><rect width="14" height="12" fill="#4858d8" /><rect x="1" y="3" width="12" height="8" fill="#fff" /><path d="M2 5h4M2 7h4M2 9h4" stroke="#e04030" /><path d="M8 5h4M8 7h4M8 9h4" stroke="#4060d0" /></svg>
                <svg width="15" height="12" viewBox="0 0 15 12"><rect y="1" width="8" height="11" fill="#3850d8" /><rect x="7" y="1" width="8" height="11" fill="#d03028" /><path d="M4 0h7v3H4zM7 3v6" fill="#eee" stroke="#888" /></svg>
                <span>US Dollar vs Japanese Yen,M5</span>
              </ChartTitle>
              <Deal>
                <DealBtn>SELL</DealBtn>
                <div>
                  <Step aria-label="ロット一覧"><Tri /></Step>
                  <Lot aria-label="ロット" defaultValue="0.05" />
                  <Step aria-label="増やす"><Tri up /></Step>
                </div>
                <DealBtn>BUY</DealBtn>
              </Deal>
              <Quotes>
                <Quote><small>106</small><strong>62</strong><sup>9</sup></Quote>
                <Quote><small>106</small><strong>71</strong><sup>1</sup></Quote>
              </Quotes>
            </OneClick>
          </ChartBox>
          <ChartTabs>
            <Tab>EURUSD,H1</Tab><Bar /><Tab>USDCHF,H1</Tab><Bar /><Tab>GBPUSD,H1</Tab><Tab $on>USDJPY,M5</Tab>
            <Arrows>
              <svg width="4" height="8" viewBox="0 0 4 8"><path d="M4 0v8L0 4z" fill="#909090" /></svg>
              <svg width="4" height="8" viewBox="0 0 4 8"><path d="M0 0v8l4-4z" fill="#909090" /></svg>
            </Arrows>
          </ChartTabs>
        </Workspace>
      </Main>
      <Toolbox>
        <Spine>
          <CloseBtn aria-label="閉じる"><Cross /></CloseBtn>
          <SpineTitle>ツールボックス</SpineTitle>
        </Spine>
        <History>
          <Split>
            <Fill>
              <HistoryTable>
                <colgroup>{columns.map((w, i) => <col key={i} width={w || undefined} />)}</colgroup>
                <thead><tr><th>時間&nbsp; <Tri up c="#444" /></th>{headings.map((h, i) => <th key={i}>{h}</th>)}</tr></thead>
                <tbody>
                  {deals.map(([time, ticket, type, vol, open, sl, tp, closed, close, profit, hit]) => (
                    <tr key={ticket}>
                      <td><Doc buy={type === 'buy'} />{time}</td>
                      <td>{ticket}</td><td>{type}</td><td>{vol}</td><td>usdjpy</td><td>{open}</td>
                      <Hit $hit={hit === 'sl' ? 'sl' : undefined}>{sl}</Hit>
                      <Hit $hit={hit === 'tp' ? 'tp' : undefined}>{tp}</Hit>
                      <td>{closed}</td><td>{close}</td><td>0</td><td>{profit}</td>
                    </tr>
                  ))}
                </tbody>
                <tfoot>
                  <tr>
                    <td colSpan={10}>
                      <Sums>
                        <svg width="12" height="12" viewBox="0 0 12 12"><circle cx="6" cy="6" r="5.400" fill="none" stroke="#222" /><path d="M3 6h6" stroke="#222" /></svg>
                        <span>損益: -5 589</span><span>クレジット: 0</span><span>入金額: 10 000</span><span>出金額: 0</span><span>残高: 4 411</span>
                      </Sums>
                    </td>
                    <td>0</td><td>-5 589</td>
                  </tr>
                </tfoot>
              </HistoryTable>
              <Gap />
            </Fill>
            <Scroll before={114} size={124} />
          </Split>
          <Edge />
        </History>
      </Toolbox>
    </Page>
  );
}
